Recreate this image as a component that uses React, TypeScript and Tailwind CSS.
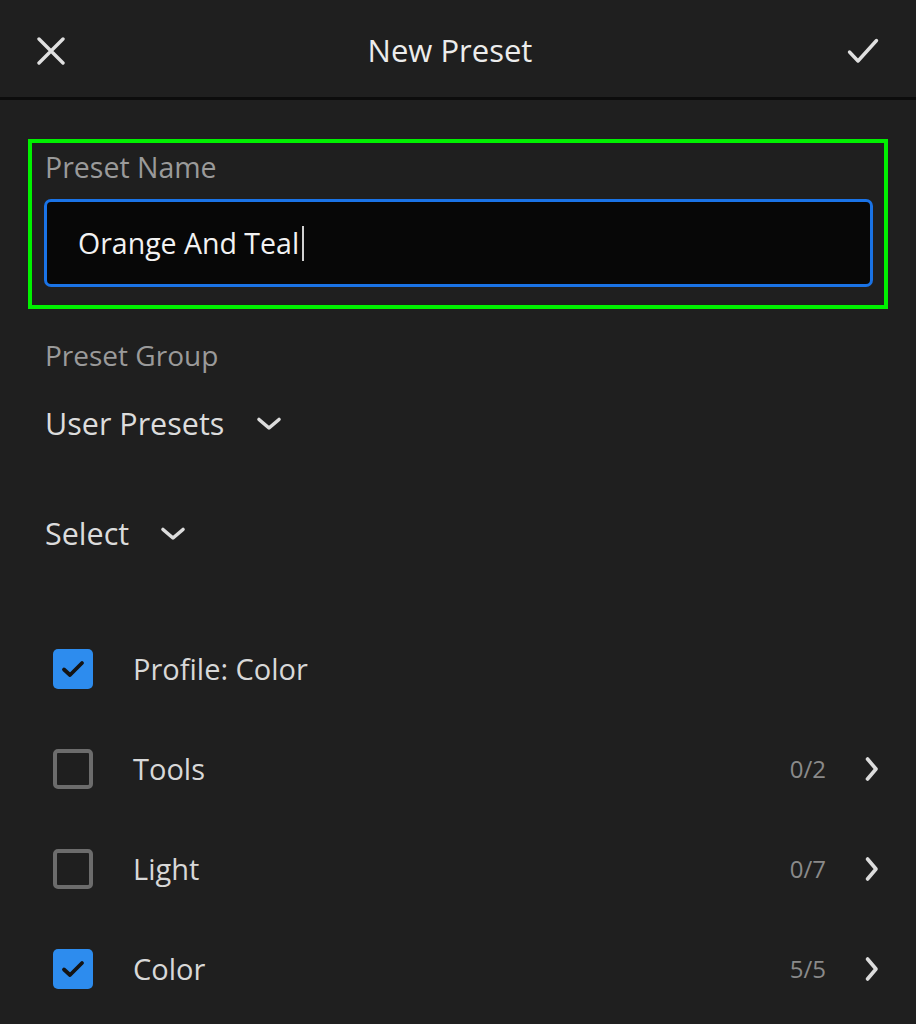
import React from "react";

const font = { fontFamily: '"Open Sans", "Noto Sans", sans-serif' };

function ChevronDown() {
  return (
    <svg width="26" height="16" viewBox="0 0 26 16" fill="none" className="block">
      <path d="M3 3.5 L13 12 L23 3.5" stroke="#dcdcdc" strokeWidth="3.6" strokeLinecap="round" strokeLinejoin="round" />
    </svg>
  );
}

function ChevronRight() {
  return (
    <svg width="16" height="26" viewBox="0 0 16 26" fill="none" className="block">
      <path d="M3.5 3 L12 13 L3.5 23" stroke="#dcdcdc" strokeWidth="3.6" strokeLinecap="round" strokeLinejoin="round" />
    </svg>
  );
}

function Checkbox({ checked }: { checked: boolean }) {
  if (checked) {
    return (
      <div className="w-[40px] h-[40px] rounded-[5px] bg-[#2d8cee] flex items-center justify-center shrink-0">
        <svg width="26" height="20" viewBox="0 0 26 20" fill="none">
          <path d="M4 10.5 L10 16 L22 4" stroke="#141414" strokeWidth="3.8" strokeLinecap="round" strokeLinejoin="round" />
        </svg>
      </div>
    );
  }
  return <div className="w-[40px] h-[40px] rounded-[5px] border-[4px] border-[#6c6c6c] shrink-0" />;
}

function Row({ label, checked, count }: { label: string; checked: boolean; count?: string }) {
  return (
    <div className="h-[100px] flex items-center pl-[53px] pr-[36px]">
      <Checkbox checked={checked} />
      <span className="ml-[40px] text-[29px] text-[#d8d8d8] flex-1">{label}</span>
      {count && (
        <>
          <span className="text-[24px] text-[#8a8a8a] mr-[38px]">{count}</span>
          <ChevronRight />
        </>
      )}
    </div>
  );
}

export default function App() {
  return (
    <div className="w-[916px] h-[1024px] bg-[#1f1f1f] overflow-hidden" style={font}>
      <div className="h-[100px] flex items-center justify-between px-[37px] pt-[4px] border-b-[3px] border-[#0c0c0c]">
        <svg width="28" height="28" viewBox="0 0 28 28" fill="none">
          <path d="M2 2 L26 26 M26 2 L2 26" stroke="#e0e0e0" strokeWidth="3.4" strokeLinecap="round" />
        </svg>
        <span className="text-[31px] text-[#ececec] -ml-[12px]">New Preset</span>
        <svg width="32" height="26" viewBox="0 0 32 26" fill="none">
          <path d="M2.5 14 L11 23 L29.5 2.5" stroke="#e0e0e0" strokeWidth="3.4" strokeLinecap="round" strokeLinejoin="round" />
        </svg>
      </div>

      <div className="mx-[28px] mt-[39px] border-[4px] border-[#00f000] pt-[6px] pb-[18px] pl-[12px] pr-[11px]">
        <div className="h-[36px] leading-[36px] pl-[1px] text-[28.5px] text-[#9a9a9a]">Preset Name</div>
        <div className="mt-[14px] h-[88px] rounded-[7px] border-[3px] border-[#1a73e6] bg-[#070707] flex items-center pl-[31px]">
          <span className="text-[28.5px] text-[#f2f2f2]">Orange And Teal</span>
          <span className="ml-[3px] w-[2px] h-[35px] bg-[#d0d0d0]" />
        </div>
      </div>

      <div className="px-[45px]">
        <div className="mt-[28px] h-[36px] leading-[36px] text-[28px] text-[#9a9a9a]">Preset Group</div>
        <div className="mt-[31px] h-[40px] flex items-center gap-[32px]">
          <span className="text-[30.5px] text-[#dcdcdc]">User Presets</span>
          <ChevronDown />
        </div>
        <div className="mt-[70px] h-[40px] flex items-center gap-[31px]">
          <span className="text-[30.5px] text-[#dcdcdc]">Select</span>
          <ChevronDown />
        </div>
      </div>

      <div className="mt-[65px]">
        <Row label="Profile: Color" checked />
        <Row label="Tools" checked={false} count="0/2" />
        <Row label="Light" checked={false} count="0/7" />
        <Row label="Color" checked count="5/5" />
      </div>
    </div>
  );
}
